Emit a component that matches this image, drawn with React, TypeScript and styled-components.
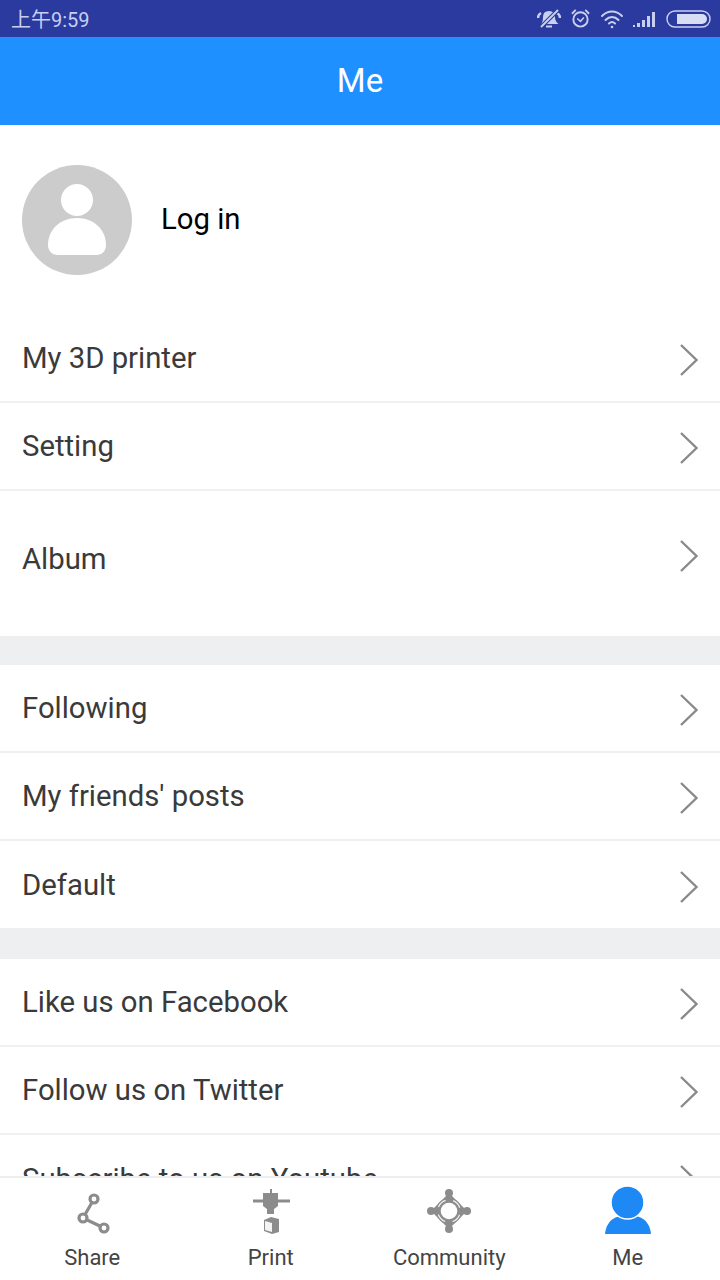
import React from 'react'
import styled, { createGlobalStyle } from 'styled-components'

const GlobalStyle = createGlobalStyle`
  html, body {
    margin: 0;
    padding: 0;
    background: #fff;
  }
  * {
    box-sizing: border-box;
  }
`

const Screen = styled.div`
  width: 720px;
  height: 1280px;
  display: flex;
  flex-direction: column;
  overflow: hidden;
  background: #fff;
  font-family: Roboto, 'Noto Sans CJK SC', sans-serif;
`

const StatusBar = styled.div`
  height: 37px;
  flex: none;
  display: flex;
  align-items: center;
  justify-content: space-between;
  padding: 0 9px 0 11px;
  background: #2b3a9f;
  color: #c9cff0;
`

const Clock = styled.span`
  font-size: 20px;
`

const StatusIcons = styled.div`
  display: flex;
  align-items: center;
  gap: 9px;
`

const Header = styled.header`
  height: 88px;
  flex: none;
  display: flex;
  align-items: center;
  justify-content: center;
  padding-bottom: 2px;
  background: #1e90ff;
  color: #fff;
  font-size: 33px;
`

const Content = styled.main`
  flex: 1;
  min-height: 0;
  overflow: hidden;
`

const Profile = styled.div`
  height: 190px;
  display: flex;
  align-items: flex-start;
  gap: 29px;
  padding: 40px 22px 0;
`

const Avatar = styled.svg`
  width: 110px;
  height: 110px;
  flex: none;
`

const LoginText = styled.span`
  margin-top: 36px;
  font-size: 29.3px;
  line-height: 36px;
  color: #000;
`

const Row = styled.div<{ $tall?: boolean; $last?: boolean }>`
  height: ${p => (p.$tall ? 145 : p.$last ? 87 : 88)}px;
  display: flex;
  align-items: center;
  justify-content: space-between;
  padding: 0 21px ${p => (p.$tall ? 10 : 0)}px 22px;
  border-bottom: ${p => (p.$last || p.$tall ? 'none' : '2px solid #f0f0f0')};
  font-size: 29.3px;
  color: #3a3a3a;
`

const Arrow = styled.svg<{ $up?: boolean }>`
  width: 20px;
  height: 34px;
  flex: none;
  transform: translateY(${p => (p.$up ? -3 : 2)}px);
`

const Gap = styled.div<{ $h: number }>`
  height: ${p => p.$h}px;
  background: #eeeff1;
`

const TabBar = styled.nav`
  height: 104px;
  flex: none;
  display: grid;
  grid-template-columns: repeat(4, 1fr);
  padding: 0 3px;
  background: #fff;
  border-top: 2px solid #eeeeee;
`

const Tab = styled.div`
  display: flex;
  flex-direction: column;
  align-items: center;
  padding-top: 8px;
  font-size: 22px;
  color: #444;
`

const TabIcon = styled.svg`
  width: 60px;
  height: 50px;
  display: block;
  margin-bottom: 9px;
`

const StatusGlyphs = () => (
  <StatusIcons>
    <svg width="24" height="20" viewBox="0 0 24 20" fill="none" stroke="#c9cff0" strokeWidth="2">
      <path d="M6 14c1-2 1-4 1-6 0-3 2-5 5-5s5 2 5 5c0 2 0 4 2 6z" fill="#c9cff0" />
      <path d="M1 9c0-2 1-4 3-5M23 9c0-2-1-4-3-5" strokeWidth="2.500" />
      <path d="M9 17.500h6" />
      <path d="M4 18L21 1" stroke="#2b3a9f" strokeWidth="4" />
      <path d="M4 18L21 1" />
    </svg>
    <svg width="21" height="21" viewBox="0 0 22 22" fill="none" stroke="#c9cff0" strokeWidth="2">
      <circle cx="11" cy="12" r="7.500" />
      <path d="M7.500 11l3.500 3 3.500-4" strokeWidth="1.600" />
      <path d="M2 6l4-4M20 6l-4-4" />
    </svg>
    <svg width="24" height="20" viewBox="0 0 24 20" fill="none" stroke="#c9cff0" strokeWidth="2" strokeLinecap="round">
      <path d="M2 7c6-6 14-6 20 0" />
      <path d="M5.500 11c4-4 9-4 13 0" />
      <path d="M9 14.500c2-2 4-2 6 0" />
      <circle cx="12" cy="18" r="1.300" fill="#c9cff0" stroke="none" />
    </svg>
    <svg width="24" height="18" viewBox="0 0 24 18" fill="#c9cff0">
      <rect x="0" y="15" width="2" height="2" />
      <rect x="4" y="13" width="3" height="4" />
      <rect x="9" y="10" width="3" height="7" />
      <rect x="14" y="6" width="3" height="11" />
      <rect x="19" y="2" width="3" height="15" />
    </svg>
    <svg width="45" height="18" viewBox="0 0 45 18">
      <rect x="1" y="1" width="43" height="16" rx="8" fill="none" stroke="#c9cff0" strokeWidth="1.400" />
      <path d="M11 4h25a5 5 0 0 1 0 10H11z" fill="#d8dcf5" />
    </svg>
  </StatusIcons>
)

const menuGroups = [
  [{ label: 'My 3D printer' }, { label: 'Setting' }, { label: 'Album', tall: true }],
  [{ label: 'Following' }, { label: "My friends' posts" }, { label: 'Default' }],
  [{ label: 'Like us on Facebook' }, { label: 'Follow us on Twitter' }, { label: 'Subscribe to us on Youtube' }],
]

const gapHeights = [29, 31]

export default function App() {
  return (
    <Screen>
      <GlobalStyle />
      <StatusBar>
        <Clock>上午9:59</Clock>
        <StatusGlyphs />
      </StatusBar>
      <Header>Me</Header>
      <Content>
        <Profile>
          <Avatar viewBox="0 0 110 110">
            <circle cx="55" cy="55" r="55" fill="#cccccc" />
            <circle cx="55" cy="35" r="16" fill="#fff" />
            <path d="M26 80c0-16 13-27 29-27s29 11 29 27c0 6-4 10-10 10H36c-6 0-10-4-10-10z" fill="#fff" />
          </Avatar>
          <LoginText>Log in</LoginText>
        </Profile>
        {menuGroups.map((group, i) => (
          <React.Fragment key={i}>
            {group.map((item, j) => (
              <Row key={item.label} $tall={'tall' in item} $last={j === group.length - 1 && !('tall' in item)}>
                {item.label}
                <Arrow viewBox="0 0 20 34" $up={'tall' in item}>
                  <path d="M2 2L17.500 17L2 32" fill="none" stroke="#8a8a8a" strokeWidth="2.400" />
                </Arrow>
              </Row>
            ))}
            {i < gapHeights.length && <Gap $h={gapHeights[i]} />}
          </React.Fragment>
        ))}
      </Content>
      <TabBar>
        <Tab>
          <TabIcon viewBox="0 0 60 50">
            <g fill="none" stroke="#8c8c8c" strokeWidth="3.200">
              <path d="M32 13L21 32L42 42" />
              <circle cx="32" cy="13" r="4" fill="#fff" />
              <circle cx="21" cy="32" r="4" fill="#fff" />
              <circle cx="42" cy="42" r="4" fill="#fff" />
            </g>
          </TabIcon>
          Share
        </Tab>
        <Tab>
          <TabIcon viewBox="0 0 60 50">
            <rect x="12" y="13.500" width="37" height="3" fill="#8c8c8c" />
            <path d="M22 7h15v13l-4 3v5h-7v-5l-4-3z" fill="#8c8c8c" />
            <path d="M29 3h2v5h-2z" fill="#8c8c8c" />
            <path d="M23 34l7-3 8 2v13l-7 2-8-3z" fill="#8c8c8c" />
            <path d="M24 35l7 2v9l-7-2z" fill="#f4f4f4" />
          </TabIcon>
          Print
        </Tab>
        <Tab>
          <TabIcon viewBox="0 0 60 50">
            <g fill="#8c8c8c">
              <circle cx="30" cy="7" r="4" />
              <circle cx="30" cy="43" r="4" />
              <circle cx="12" cy="25" r="4" />
              <circle cx="48" cy="25" r="4" />
              <path d="M30 7l18 18-18 18-18-18z" />
              <circle cx="30" cy="25" r="13" />
            </g>
            <circle cx="30" cy="25" r="8.300" fill="#fff" />
            <circle cx="30" cy="25" r="11.200" fill="none" stroke="#f0f0f0" strokeWidth="1.200" strokeDasharray="10 7.600" strokeDashoffset="-3.800" />
          </TabIcon>
          Community
        </Tab>
        <Tab>
          <TabIcon viewBox="0 0 60 50">
            <path d="M7 48Q9 29 30 29Q51 29 53 48Z" fill="#1e88f5" />
            <circle cx="29.500" cy="16.500" r="16.500" fill="#1e88f5" stroke="#fff" strokeWidth="1.500" />
          </TabIcon>
          Me
        </Tab>
      </TabBar>
    </Screen>
  )
}
